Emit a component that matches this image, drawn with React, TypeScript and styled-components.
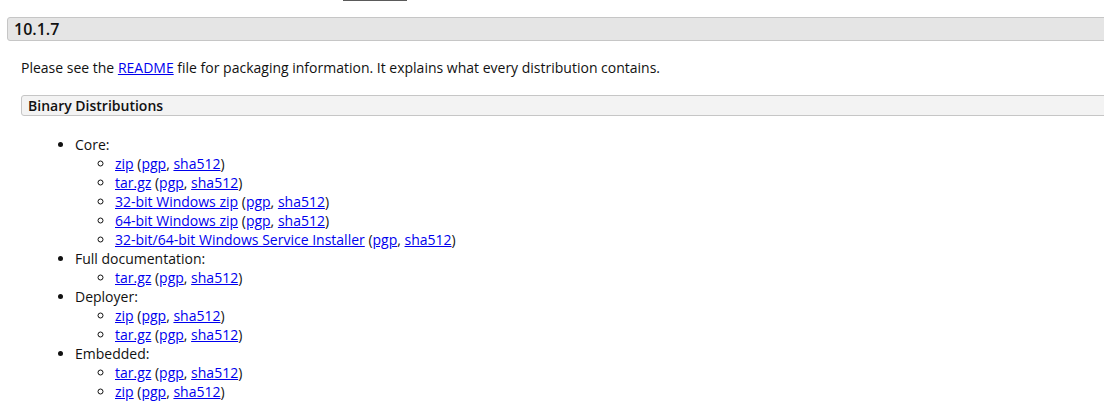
import React from "react";
import styled, { createGlobalStyle } from "styled-components";

const GlobalStyle = createGlobalStyle`
  html, body {
    margin: 0;
    padding: 0;
    background: #ffffff;
    overflow: hidden;
  }
  body {
    font-family: "Open Sans", "Liberation Sans", sans-serif;
    font-size: 14px;
    color: #111;
  }
`;

const Page = styled.div`
  width: 1104px;
  height: 416px;
  overflow: hidden;
`;

const TopStub = styled.div`
  width: 64px;
  height: 1px;
  margin-left: 343px;
  background: #5a5a5a;
`;

const VersionBar = styled.h3`
  margin: 16px -10px 0 7px;
  height: 22px;
  padding: 0 0 0 6px;
  background: #e5e5e5;
  border: 1px solid #c6c6c6;
  border-radius: 3px;
  font-size: 16px;
  font-weight: 600;
  line-height: 22px;
`;

const Section = styled.div`
  padding-left: 21px;
`;

const Intro = styled.p`
  margin: 17px 0 0 0;
  line-height: 19px;
`;

const SubBar = styled.h4`
  margin: 18px -10px 0 0;
  height: 19px;
  padding: 0 0 0 6px;
  background: #f3f3f3;
  border: 1px solid #c6c6c6;
  border-radius: 3px;
  font-size: 14px;
  font-weight: 600;
  line-height: 19px;
`;

const List = styled.ul<{ $nested?: boolean }>`
  margin: ${(p) => (p.$nested ? "0" : "19px 0 0 0")};
  padding-left: ${(p) => (p.$nested ? "40px" : "54px")};
  list-style-type: ${(p) => (p.$nested ? "circle" : "disc")};
  line-height: 19px;
`;

const Link = styled.a`
  color: #0000ee;
  text-decoration: underline;
`;

type Item = { name: string };

const groups: { title: string; items: Item[] }[] = [
  {
    title: "Core:",
    items: [
      { name: "zip" },
      { name: "tar.gz" },
      { name: "32-bit Windows zip" },
      { name: "64-bit Windows zip" },
      { name: "32-bit/64-bit Windows Service Installer" },
    ],
  },
  { title: "Full documentation:", items: [{ name: "tar.gz" }] },
  { title: "Deployer:", items: [{ name: "zip" }, { name: "tar.gz" }] },
  { title: "Embedded:", items: [{ name: "tar.gz" }, { name: "zip" }] },
];

export default function App() {
  return (
    <Page>
      <GlobalStyle />
      <TopStub />
      <VersionBar>10.1.7</VersionBar>
      <Section>
        <Intro>
          Please see the <Link href="#">README</Link> file for packaging
          information. It explains what every distribution contains.
        </Intro>
        <SubBar>Binary Distributions</SubBar>
        <List>
          {groups.map((g) => (
            <li key={g.title}>
              {g.title}
              <List $nested>
                {g.items.map((it, i) => (
                  <li key={i}>
                    <Link href="#">{it.name}</Link> (
                    <Link href="#">pgp</Link>, <Link href="#">sha512</Link>)
                  </li>
                ))}
              </List>
            </li>
          ))}
        </List>
      </Section>
    </Page>
  );
}
